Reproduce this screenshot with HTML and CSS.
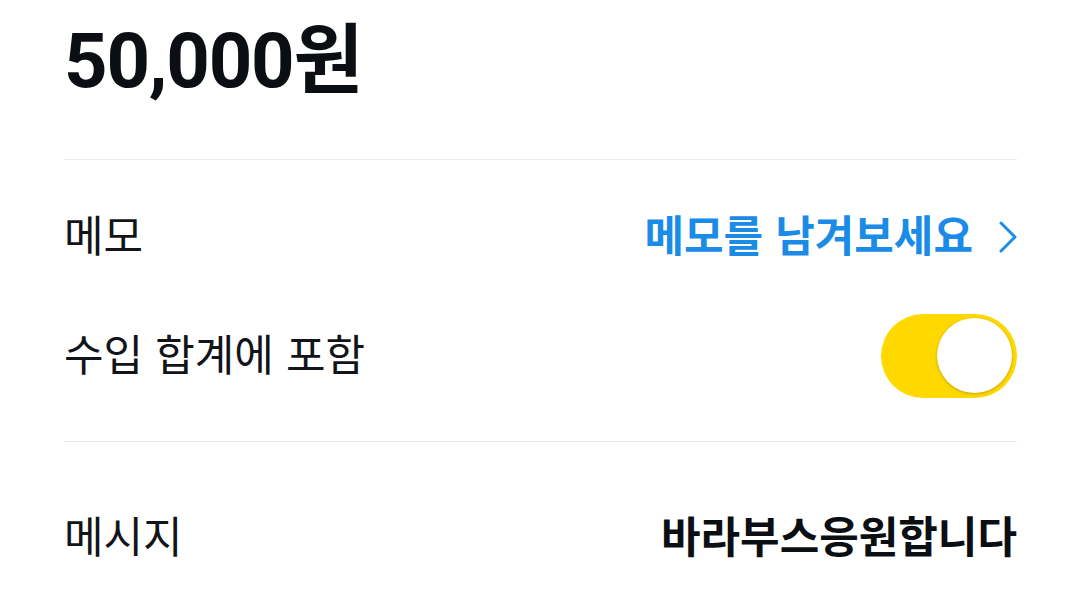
FILE: index.html
```html
<!DOCTYPE html>
<html lang="ko">
<head>
<meta charset="utf-8">
<link rel="stylesheet" href="styles.css">
</head>
<body>
<div class="page">
  <div class="amount-block">
    <div class="amount">50,000원</div>
  </div>
  <div class="divider"></div>
  <div class="section">
    <div class="row">
      <div class="label">메모</div>
      <div class="memo-link">
        <span class="memo-text">메모를 남겨보세요</span>
        <svg class="chevron" width="18" height="32" viewBox="0 0 18 32"><path d="M2 2 L16 16 L2 30" fill="none" stroke="#1f8ce6" stroke-width="3" stroke-linecap="round" stroke-linejoin="round"/></svg>
      </div>
    </div>
    <div class="row">
      <div class="label">수입 합계에 포함</div>
      <div class="toggle"><div class="knob"></div></div>
    </div>
  </div>
  <div class="divider"></div>
  <div class="section2">
    <div class="row">
      <div class="label">메시지</div>
      <div class="value">바라부스응원합니다</div>
    </div>
  </div>
</div>
</body>
</html>
```
FILE: styles.css
```css
html, body {
  margin: 0;
  padding: 0;
  background: #ffffff;
}
body {
  font-family: Roboto, "Noto Sans CJK KR", sans-serif;
  color: #111418;
  overflow: hidden;
}
.page {
  width: 1080px;
  height: 596px;
  padding: 0 63px 0 64px;
  box-sizing: border-box;
}
.amount-block {
  height: 159px;
  padding-top: 11px;
  box-sizing: border-box;
}
.amount {
  font-size: 76px;
  font-weight: 700;
  line-height: 100px;
  color: #0b0f14;
  letter-spacing: -1.2px;
}
.divider {
  height: 1px;
  background: #ebebeb;
}
.section {
  padding: 17px 0 26px;
}
.section2 {
  padding-top: 36px;
}
.row {
  height: 119px;
  display: flex;
  align-items: center;
  justify-content: space-between;
}
.label {
  font-family: "Noto Sans CJK KR", sans-serif;
  font-size: 43px;
  line-height: 60px;
  font-weight: 400;
  color: #111418;
  margin-bottom: 7px;
}
.memo-link {
  display: flex;
  align-items: center;
  gap: 26px;
}
.memo-text {
  font-family: "Noto Sans CJK KR", sans-serif;
  font-size: 43px;
  line-height: 60px;
  font-weight: 700;
  color: #1a8be6;
  margin-bottom: 7px;
}
.chevron {
  display: block;
}
.toggle {
  width: 136px;
  height: 84px;
  border-radius: 42px;
  background: #ffd800;
  display: flex;
  align-items: center;
  justify-content: flex-end;
  padding-right: 5px;
  box-sizing: border-box;
}
.knob {
  width: 75px;
  height: 75px;
  border-radius: 50%;
  background: #ffffff;
  box-shadow: 0 1px 3px rgba(0, 0, 0, 0.25);
}
.value {
  font-family: "Noto Sans CJK KR", sans-serif;
  font-size: 43px;
  line-height: 60px;
  font-weight: 700;
  color: #0b0f14;
  margin-bottom: 7px;
}
```
